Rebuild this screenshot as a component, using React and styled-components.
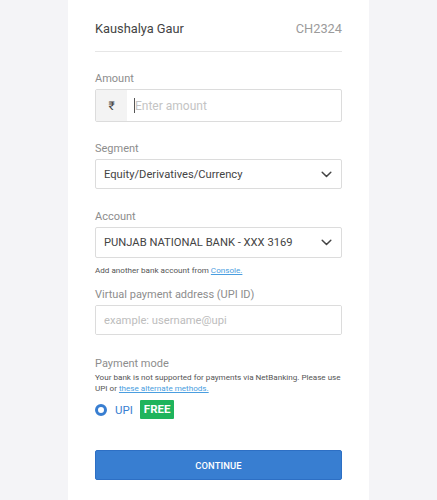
import React from "react";
import styled, { createGlobalStyle } from "styled-components";

const Global = createGlobalStyle`
  html, body { margin: 0; padding: 0; background: #f4f4f7; }
  body { font-family: Roboto, "Noto Sans", sans-serif; -webkit-font-smoothing: antialiased; }
  * { box-sizing: border-box; }
`;

const Page = styled.div`
  display: flex;
  justify-content: center;
  min-height: 500px;
`;

const Card = styled.div`
  width: 301px;
  background: #fff;
  padding: 18px 27px 20px;
  display: flex;
  flex-direction: column;
`;

const Header = styled.div`
  display: flex;
  justify-content: space-between;
  align-items: center;
  height: 20px;
  padding-bottom: 13px;
  border-bottom: 1px solid #e6e6e6;
  box-sizing: content-box;
  font-size: 12.8px;
`;

const Name = styled.span`
  color: #444;
`;

const Code = styled.span`
  color: #9b9b9b;
`;

const Field = styled.div`
  display: flex;
  flex-direction: column;
  margin-top: ${(p) => p.$mt}px;
`;

const Label = styled.label`
  font-size: 11px;
  color: #8d8d8d;
  line-height: 16px;
  padding-top: 2px;
  margin-bottom: ${(p) => (p.$mb === undefined ? 2 : p.$mb)}px;
`;

const InputBox = styled.div`
  display: flex;
  height: ${(p) => p.$h}px;
  border: 1px solid #dcdcdc;
  border-radius: 2px;
  overflow: hidden;
`;

const Prefix = styled.div`
  width: 31px;
  background: #f3f3f3;
  display: flex;
  align-items: center;
  justify-content: center;
  color: #444;
  font-size: 12px;
`;

const Input = styled.input`
  flex: 1;
  border: none;
  outline: none;
  padding: 0 8px;
  font-family: inherit;
  font-size: 11.2px;
  color: #444;
  &::placeholder { color: #bdbdbd; }
`;

const Cursor = styled.div`
  display: flex;
  align-items: center;
  flex: 1;
  padding-left: 7px;
  font-size: 12px;
  color: #c4c4c4;
  &::before {
    content: "";
    width: 1px;
    height: 15px;
    background: #555;
  }
`;

const Select = styled.div`
  display: flex;
  align-items: center;
  justify-content: space-between;
  height: ${(p) => p.$h}px;
  border: 1px solid #dcdcdc;
  border-radius: 2px;
  padding: 0 9px 0 8px;
  font-size: 11.2px;
  color: #444;
`;

const Help = styled.div`
  font-size: 8.1px;
  color: #555;
  margin-top: ${(p) => p.$mt}px;
  line-height: 11px;
  a { color: #4a9ee0; text-decoration: underline; }
`;

const RadioRow = styled.div`
  display: flex;
  align-items: center;
  margin-top: 6px;
`;

const Radio = styled.span`
  width: 12px;
  height: 12px;
  border-radius: 50%;
  border: 3.5px solid #387ed1;
  margin-left: 0px;
  margin-right: 8px;
`;

const Upi = styled.span`
  color: #387ed1;
  font-size: 11.5px;
  margin-right: 7px;
`;

const Badge = styled.span`
  background: #1fb45c;
  color: #fff;
  font-weight: 700;
  font-size: 11.5px;
  padding: 2px 4px;
  line-height: 15px;
  border-radius: 1px;
`;

const Button = styled.button`
  margin-top: 31px;
  height: 30px;
  background: #387ed1;
  border: 1px solid #2d6fc4;
  border-radius: 2px;
  color: #fff;
  font-family: inherit;
  font-size: 9.4px;
  font-weight: 500;
  letter-spacing: 0.1px;
`;

const Chevron = () => (
  <svg width="11" height="7" viewBox="0 0 11 7" fill="none">
    <path d="M1.2 1.2 L5.5 5.5 L9.8 1.2" stroke="#444" strokeWidth="1.5" strokeLinecap="round" strokeLinejoin="round" />
  </svg>
);

export default function App() {
  return (
    <>
      <Global />
      <Page>
        <Card>
          <Header>
            <Name>Kaushalya Gaur</Name>
            <Code>CH2324</Code>
          </Header>
          <Field $mt={17}>
            <Label>Amount</Label>
            <InputBox $h={33}>
              <Prefix>₹</Prefix>
              <Cursor>Enter amount</Cursor>
            </InputBox>
          </Field>
          <Field $mt={17}>
            <Label>Segment</Label>
            <Select $h={30}>
              <span>Equity/Derivatives/Currency</span>
              <Chevron />
            </Select>
          </Field>
          <Field $mt={18}>
            <Label>Account</Label>
            <Select $h={31}>
              <span>PUNJAB NATIONAL BANK - XXX 3169</span>
              <Chevron />
            </Select>
            <Help $mt={7}>
              Add another bank account from <a href="#">Console.</a>
            </Help>
          </Field>
          <Field $mt={9}>
            <Label>Virtual payment address (UPI ID)</Label>
            <InputBox $h={30}>
              <Input placeholder="example: username@upi" />
            </InputBox>
          </Field>
          <Field $mt={19}>
            <Label $mb={0}>Payment mode</Label>
            <Help $mt={0}>
              Your bank is not supported for payments via NetBanking. Please use
              UPI or <a href="#">these alternate methods.</a>
            </Help>
            <RadioRow>
              <Radio />
              <Upi>UPI</Upi>
              <Badge>FREE</Badge>
            </RadioRow>
          </Field>
          <Button>CONTINUE</Button>
        </Card>
      </Page>
    </>
  );
}
